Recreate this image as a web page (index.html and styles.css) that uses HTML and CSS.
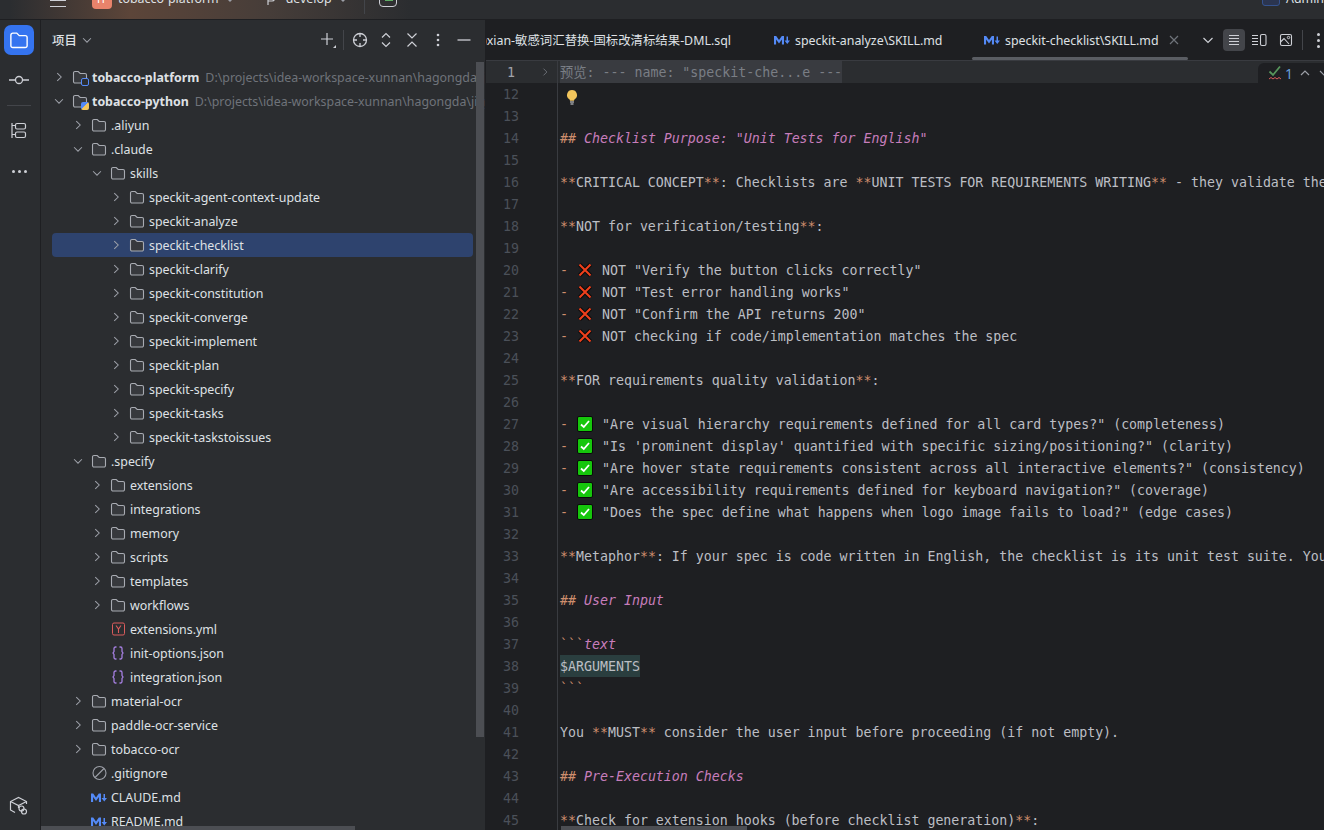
FILE: index.html
```html
<!doctype html>
<html>
<head>
    <meta charset="utf-8">
    <title>tobacco-platform</title>
    <link rel="stylesheet" href="styles.css">
</head>
<body>
<svg class="sprite" width="0" height="0">
    <symbol id="folder" viewBox="0 0 16 16"><path d="M1.500 4a1.500 1.500 0 0 1 1.500-1.500h3.200l2 2H13A1.500 1.500 0 0 1 14.500 6v6.500A1.500 1.500 0 0 1 13 14H3a1.500 1.500 0 0 1-1.500-1.500z" fill="var(--folder-fill, #37393d)" stroke="currentColor" stroke-width="1.100"/></symbol>
    <symbol id="right" viewBox="0 0 16 16"><path d="M6 3.500L10.500 8 6 12.500" fill="none" stroke="currentColor" stroke-width="1.200"/></symbol>
    <symbol id="down" viewBox="0 0 16 16"><path d="M3.500 6L8 10.500 12.500 6" fill="none" stroke="currentColor" stroke-width="1.200"/></symbol>
    <symbol id="json" viewBox="0 0 16 16"><path d="M6.500 2H5.500A1.500 1.500 0 0 0 4 3.500v3L3 8l1 1.500v3A1.500 1.500 0 0 0 5.500 14h1M9.500 2h1A1.500 1.500 0 0 1 12 3.500v3L13 8l-1 1.500v3a1.500 1.500 0 0 1-1.500 1.500h-1" fill="none" stroke="#a57fe0" stroke-width="1.300"/></symbol>
    <symbol id="md" viewBox="0 0 16 10"><path d="M0 9.500V1h2.200L5 5l2.800-4H10v8.500H7.900V4.600L5 8.400 2.100 4.600v4.900zM12.500 1.500H14v4h2L13.250 9 10.500 5.500h2z" fill="#548af7"/></symbol>
    <symbol id="cross" viewBox="0 0 16 16"><path d="M2.500 2.500L13.500 13.500M13.500 2.500L2.500 13.500" fill="none" stroke="#0a0a0a" stroke-width="4"/><path d="M2.500 2.500L13.500 13.500M13.500 2.500L2.500 13.500" fill="none" stroke="#f0401c" stroke-width="2"/></symbol>
    <symbol id="check" viewBox="0 0 16 16"><rect x="0.500" y="0.500" width="15" height="15" rx="1.500" fill="#16c60c" stroke="#0a0a0a"/><path d="M4 8.500L6.800 11 12 5" fill="none" stroke="#fff" stroke-width="1.800"/></symbol>
</svg>

<div class="titlebar">
    <div class="menu-btn"><span></span><span></span><span></span></div>
    <div class="badge">TP</div>
    <span class="title-text">tobacco-platform</span>
    <span class="mini-caret"></span>
    <svg class="branch-icon" width="12" height="14" viewBox="0 0 12 14"><path d="M2 0v14M2 5h4a2.500 2.500 0 0 1 0 5H2" fill="none" stroke="#ced0d6" stroke-width="1.200"/></svg>
    <span class="title-text branch">develop</span>
    <span class="mini-caret"></span>
    <span class="title-sep"></span>
    <div class="run-icon"><span></span></div>
    <div class="title-right">
        <span class="user-box"></span>
        <span class="title-text">Admin</span>
    </div>
</div>

<div class="main">
    <div class="stripe">
        <div class="stripe-btn active"><svg width="20" height="20"><use href="#folder"/></svg></div>
        <div class="stripe-btn commit">
            <svg width="20" height="20" viewBox="0 0 20 20"><circle cx="10" cy="10" r="3.500" fill="none" stroke="currentColor" stroke-width="1.300"/><path d="M0 10h6.500M13.500 10H20" stroke="currentColor" stroke-width="1.300"/></svg>
        </div>
        <div class="stripe-sep"></div>
        <div class="stripe-btn">
            <svg width="20" height="20" viewBox="0 0 20 20"><path d="M3 2v15M3 4.500h3M3 13.500h3" stroke="currentColor" fill="none" stroke-width="1.200"/><rect x="6.500" y="2.500" width="10" height="5.500" rx="1.500" fill="none" stroke="currentColor" stroke-width="1.200"/><rect x="6.500" y="11" width="10" height="5.500" rx="1.500" fill="none" stroke="currentColor" stroke-width="1.200"/></svg>
        </div>
        <div class="stripe-btn dots"><span></span><span></span><span></span></div>
        <div class="stripe-bottom">
            <svg width="20" height="20" viewBox="0 0 20 20"><path d="M6 16.500L1.500 14V5.500L9.500 1.500l8 4V8M1.500 5.500L9.500 9.500l8-4M9.500 9.500V12" fill="none" stroke="currentColor" stroke-width="1.200"/><circle cx="12.500" cy="12.500" r="2.500" fill="none" stroke="currentColor" stroke-width="1.200"/><circle cx="15" cy="15.500" r="2.500" fill="none" stroke="currentColor" stroke-width="1.200"/></svg>
        </div>
    </div>

    <div class="project">
        <div class="panel-head">
            <span class="panel-title">项目</span>
            <svg class="panel-caret" width="14" height="14"><use href="#down"/></svg>
            <div class="panel-tools">
                <svg width="18" height="18" viewBox="0 0 18 18"><path d="M8 2v12M2 8h12" stroke="#ced0d6" stroke-width="1.200"/><path d="M17 14v3h-3z" fill="#ced0d6"/></svg>
                <span class="tool-sep"></span>
                <svg width="16" height="16" viewBox="0 0 16 16"><circle cx="8" cy="8" r="6.500" fill="none" stroke="#ced0d6" stroke-width="1.300"/><path d="M8 1.500v3.500M8 11v3.500M1.500 8H5M11 8h3.500" stroke="#ced0d6" stroke-width="1.300"/></svg>
                <svg width="16" height="16" viewBox="0 0 16 16"><path d="M4 5.500l4-4 4 4M4 10.500l4 4 4-4" fill="none" stroke="#ced0d6" stroke-width="1.200"/></svg>
                <svg width="16" height="16" viewBox="0 0 16 16"><path d="M3.500 1.500L8 6l4.500-4.500M3.500 14.500L8 10l4.500 4.500" fill="none" stroke="#ced0d6" stroke-width="1.200"/></svg>
                <svg width="16" height="16" viewBox="0 0 16 16"><circle cx="8" cy="3" r="1.300" fill="#ced0d6"/><circle cx="8" cy="8" r="1.300" fill="#ced0d6"/><circle cx="8" cy="13" r="1.300" fill="#ced0d6"/></svg>
                <svg width="16" height="16" viewBox="0 0 16 16"><path d="M1.500 8h13" stroke="#ced0d6" stroke-width="1.300"/></svg>
            </div>
        </div>
        <div class="tree">
            <div class="row d0"><svg class="chev"><use href="#right"/></svg>
                <span class="root-icon"><svg class="ico"><use href="#folder"/></svg><i class="mod-java"></i></span>
                <b>tobacco-platform</b><span class="path">D:\projects\idea-workspace-xunnan\hagongda\jin</span></div>
            <div class="row d0"><svg class="chev"><use href="#down"/></svg>
                <span class="root-icon"><svg class="ico"><use href="#folder"/></svg><i class="mod-py"></i></span>
                <b>tobacco-python</b><span class="path">D:\projects\idea-workspace-xunnan\hagongda\jinyan</span></div>
            <div class="row d1"><svg class="chev"><use href="#right"/></svg><svg class="ico"><use href="#folder"/></svg>.aliyun</div>
            <div class="row d1"><svg class="chev"><use href="#down"/></svg><svg class="ico"><use href="#folder"/></svg>.claude</div>
            <div class="row d2"><svg class="chev"><use href="#down"/></svg><svg class="ico"><use href="#folder"/></svg>skills</div>
            <div class="row d3"><svg class="chev"><use href="#right"/></svg><svg class="ico"><use href="#folder"/></svg>speckit-agent-context-update</div>
            <div class="row d3"><svg class="chev"><use href="#right"/></svg><svg class="ico"><use href="#folder"/></svg>speckit-analyze</div>
            <div class="row d3 selected"><svg class="chev"><use href="#right"/></svg><svg class="ico"><use href="#folder"/></svg>speckit-checklist</div>
            <div class="row d3"><svg class="chev"><use href="#right"/></svg><svg class="ico"><use href="#folder"/></svg>speckit-clarify</div>
            <div class="row d3"><svg class="chev"><use href="#right"/></svg><svg class="ico"><use href="#folder"/></svg>speckit-constitution</div>
            <div class="row d3"><svg class="chev"><use href="#right"/></svg><svg class="ico"><use href="#folder"/></svg>speckit-converge</div>
            <div class="row d3"><svg class="chev"><use href="#right"/></svg><svg class="ico"><use href="#folder"/></svg>speckit-implement</div>
            <div class="row d3"><svg class="chev"><use href="#right"/></svg><svg class="ico"><use href="#folder"/></svg>speckit-plan</div>
            <div class="row d3"><svg class="chev"><use href="#right"/></svg><svg class="ico"><use href="#folder"/></svg>speckit-specify</div>
            <div class="row d3"><svg class="chev"><use href="#right"/></svg><svg class="ico"><use href="#folder"/></svg>speckit-tasks</div>
            <div class="row d3"><svg class="chev"><use href="#right"/></svg><svg class="ico"><use href="#folder"/></svg>speckit-taskstoissues</div>
            <div class="row d1"><svg class="chev"><use href="#down"/></svg><svg class="ico"><use href="#folder"/></svg>.specify</div>
            <div class="row d2"><svg class="chev"><use href="#right"/></svg><svg class="ico"><use href="#folder"/></svg>extensions</div>
            <div class="row d2"><svg class="chev"><use href="#right"/></svg><svg class="ico"><use href="#folder"/></svg>integrations</div>
            <div class="row d2"><svg class="chev"><use href="#right"/></svg><svg class="ico"><use href="#folder"/></svg>memory</div>
            <div class="row d2"><svg class="chev"><use href="#right"/></svg><svg class="ico"><use href="#folder"/></svg>scripts</div>
            <div class="row d2"><svg class="chev"><use href="#right"/></svg><svg class="ico"><use href="#folder"/></svg>templates</div>
            <div class="row d2"><svg class="chev"><use href="#right"/></svg><svg class="ico"><use href="#folder"/></svg>workflows</div>
            <div class="row d2 leaf"><svg class="ico" viewBox="0 0 16 16"><rect x="2.500" y="2" width="12" height="12" rx="1.500" fill="none" stroke="#db5c5c"/><path d="M6 4.500L8.500 8 11 4.500M8.500 8v4" fill="none" stroke="#db5c5c" stroke-width="1.100"/></svg>extensions.yml</div>
            <div class="row d2 leaf"><svg class="ico"><use href="#json"/></svg>init-options.json</div>
            <div class="row d2 leaf"><svg class="ico"><use href="#json"/></svg>integration.json</div>
            <div class="row d1"><svg class="chev"><use href="#right"/></svg><svg class="ico"><use href="#folder"/></svg>material-ocr</div>
            <div class="row d1"><svg class="chev"><use href="#right"/></svg><svg class="ico"><use href="#folder"/></svg>paddle-ocr-service</div>
            <div class="row d1"><svg class="chev"><use href="#right"/></svg><svg class="ico"><use href="#folder"/></svg>tobacco-ocr</div>
            <div class="row d1 leaf"><svg class="ico" viewBox="0 0 16 16"><circle cx="8.500" cy="8" r="6.500" fill="none" stroke="#9da0a8" stroke-width="1.100"/><path d="M4 12.500l9-9" stroke="#9da0a8" stroke-width="1.100"/></svg>.gitignore</div>
            <div class="row d1 leaf"><svg class="ico md-ico"><use href="#md"/></svg>CLAUDE.md</div>
            <div class="row d1 leaf"><svg class="ico md-ico"><use href="#md"/></svg>README.md</div>
        </div>
        <div class="vscroll"></div>
        <div class="hscroll"></div>
    </div>

    <div class="editor">
        <div class="tabs">
            <div class="tab tab-sql">)xian-敏感词汇替换-国标改清标结果-DML.sql</div>
            <div class="tab tab-analyze"><svg class="tab-md"><use href="#md"/></svg>speckit-analyze\SKILL.md</div>
            <div class="tab tab-active"><svg class="tab-md"><use href="#md"/></svg>speckit-checklist\SKILL.md
                <svg class="tab-close" width="10" height="10" viewBox="0 0 10 10"><path d="M1 1l8 8M9 1l-8 8" stroke="#6f737a" stroke-width="1.200"/></svg>
            </div>
            <div class="tab-tools">
                <svg class="tab-more" width="16" height="16"><use href="#down"/></svg>
                <span class="view-btn on"><svg width="14" height="14" viewBox="0 0 14 14"><path d="M2 2.500h10M2 5.500h10M2 8.500h10M2 11.500h10" stroke="#ced0d6" stroke-width="1.100"/></svg></span>
                <span class="view-btn"><svg width="16" height="14" viewBox="0 0 16 14"><path d="M1 2.500h6M1 5.500h6M1 8.500h6M1 11.500h6" stroke="#ced0d6" stroke-width="1.100"/><rect x="9.500" y="1.500" width="5.500" height="11" rx="1.500" fill="none" stroke="#ced0d6" stroke-width="1.100"/></svg></span>
                <span class="view-btn"><svg width="14" height="14" viewBox="0 0 14 14"><rect x="1.500" y="1.500" width="11" height="11" rx="1.500" fill="none" stroke="#ced0d6" stroke-width="1.100"/><path d="M1.500 9L5 5.500l5 5.500" fill="none" stroke="#ced0d6" stroke-width="1.100"/><circle cx="9.500" cy="4.500" r="1.200" fill="none" stroke="#ced0d6"/></svg></span>
                <span class="tool-sep"></span>
                <span class="more-dots"><i></i><i></i><i></i></span>
            </div>
        </div>
        <div class="code">
            <div class="line fold-line"><span class="num cur">1</span><span class="gut"><svg width="12" height="12"><use href="#right"/></svg></span><span class="txt"><span class="folded">预览: --- name: "speckit-che...e ---</span></span></div>
            <div class="line"><span class="num">12</span><span class="gut"></span><span class="txt"><svg class="bulb" width="14" height="16" viewBox="0 0 14 16"><path d="M7 1a5 5 0 0 0-3 9c.6.5 1 1 1 1.800h4c0-.8.4-1.300 1-1.800A5 5 0 0 0 7 1z" fill="#f2c55c"/><path d="M5 13h4M5.500 15h3" stroke="#dfe1e5"/></svg></span></div>
            <div class="line"><span class="num">13</span><span class="gut"></span><span class="txt"></span></div>
            <div class="line"><span class="num">14</span><span class="gut"></span><span class="txt"><span class="mk">##</span> <span class="h">Checklist Purpose: "Unit Tests for English"</span></span></div>
            <div class="line"><span class="num">15</span><span class="gut"></span><span class="txt"></span></div>
            <div class="line"><span class="num">16</span><span class="gut"></span><span class="txt"><span class="mk">**</span>CRITICAL CONCEPT<span class="mk">**</span>: Checklists are <span class="mk">**</span>UNIT TESTS FOR REQUIREMENTS WRITING<span class="mk">**</span> - they validate the quality</span></div>
            <div class="line"><span class="num">17</span><span class="gut"></span><span class="txt"></span></div>
            <div class="line"><span class="num">18</span><span class="gut"></span><span class="txt"><span class="mk">**</span>NOT for verification/testing<span class="mk">**</span>:</span></div>
            <div class="line"><span class="num">19</span><span class="gut"></span><span class="txt"></span></div>
            <div class="line"><span class="num">20</span><span class="gut"></span><span class="txt"><span class="mk">-</span> <svg class="emoji"><use href="#cross"/></svg>NOT "Verify the button clicks correctly"</span></div>
            <div class="line"><span class="num">21</span><span class="gut"></span><span class="txt"><span class="mk">-</span> <svg class="emoji"><use href="#cross"/></svg>NOT "Test error handling works"</span></div>
            <div class="line"><span class="num">22</span><span class="gut"></span><span class="txt"><span class="mk">-</span> <svg class="emoji"><use href="#cross"/></svg>NOT "Confirm the API returns 200"</span></div>
            <div class="line"><span class="num">23</span><span class="gut"></span><span class="txt"><span class="mk">-</span> <svg class="emoji"><use href="#cross"/></svg>NOT checking if code/implementation matches the spec</span></div>
            <div class="line"><span class="num">24</span><span class="gut"></span><span class="txt"></span></div>
            <div class="line"><span class="num">25</span><span class="gut"></span><span class="txt"><span class="mk">**</span>FOR requirements quality validation<span class="mk">**</span>:</span></div>
            <div class="line"><span class="num">26</span><span class="gut"></span><span class="txt"></span></div>
            <div class="line"><span class="num">27</span><span class="gut"></span><span class="txt"><span class="mk">-</span> <svg class="emoji"><use href="#check"/></svg>"Are visual hierarchy requirements defined for all card types?" (completeness)</span></div>
            <div class="line"><span class="num">28</span><span class="gut"></span><span class="txt"><span class="mk">-</span> <svg class="emoji"><use href="#check"/></svg>"Is 'prominent display' quantified with specific sizing/positioning?" (clarity)</span></div>
            <div class="line"><span class="num">29</span><span class="gut"></span><span class="txt"><span class="mk">-</span> <svg class="emoji"><use href="#check"/></svg>"Are hover state requirements consistent across all interactive elements?" (consistency)</span></div>
            <div class="line"><span class="num">30</span><span class="gut"></span><span class="txt"><span class="mk">-</span> <svg class="emoji"><use href="#check"/></svg>"Are accessibility requirements defined for keyboard navigation?" (coverage)</span></div>
            <div class="line"><span class="num">31</span><span class="gut"></span><span class="txt"><span class="mk">-</span> <svg class="emoji"><use href="#check"/></svg>"Does the spec define what happens when logo image fails to load?" (edge cases)</span></div>
            <div class="line"><span class="num">32</span><span class="gut"></span><span class="txt"></span></div>
            <div class="line"><span class="num">33</span><span class="gut"></span><span class="txt"><span class="mk">**</span>Metaphor<span class="mk">**</span>: If your spec is code written in English, the checklist is its unit test suite. You are</span></div>
            <div class="line"><span class="num">34</span><span class="gut"></span><span class="txt"></span></div>
            <div class="line"><span class="num">35</span><span class="gut"></span><span class="txt"><span class="mk">##</span> <span class="h">User Input</span></span></div>
            <div class="line"><span class="num">36</span><span class="gut"></span><span class="txt"></span></div>
            <div class="line"><span class="num">37</span><span class="gut"></span><span class="txt"><span class="mk">```</span><span class="h">text</span></span></div>
            <div class="line"><span class="num">38</span><span class="gut"></span><span class="txt"><span class="arg">$ARGUMENTS</span></span></div>
            <div class="line"><span class="num">39</span><span class="gut"></span><span class="txt"><span class="mk">```</span></span></div>
            <div class="line"><span class="num">40</span><span class="gut"></span><span class="txt"></span></div>
            <div class="line"><span class="num">41</span><span class="gut"></span><span class="txt">You <span class="mk">**</span>MUST<span class="mk">**</span> consider the user input before proceeding (if not empty).</span></div>
            <div class="line"><span class="num">42</span><span class="gut"></span><span class="txt"></span></div>
            <div class="line"><span class="num">43</span><span class="gut"></span><span class="txt"><span class="mk">##</span> <span class="h">Pre-Execution Checks</span></span></div>
            <div class="line"><span class="num">44</span><span class="gut"></span><span class="txt"></span></div>
            <div class="line"><span class="num">45</span><span class="gut"></span><span class="txt"><span class="mk">**</span>Check for extension hooks (before checklist generation)<span class="mk">**</span>:</span></div>
        </div>
        <div class="inspect">
            <svg width="14" height="16" viewBox="0 0 14 16"><path d="M1.500 6.500L5 10l7-8.500" fill="none" stroke="#57965c" stroke-width="1.800"/><path d="M1 14l2-1.500 2 1.500 2-1.500 2 1.500 2-1.500 2 1.500" fill="none" stroke="#db5c5c"/></svg>
            <span class="inspect-num">1</span>
            <svg class="inspect-arrow" width="12" height="12" viewBox="0 0 12 12"><path d="M2 8l4-4 4 4" fill="none" stroke="#9da0a8" stroke-width="1.200"/></svg>
            <svg class="inspect-arrow" width="12" height="12" viewBox="0 0 12 12"><path d="M2 4l4 4 4-4" fill="none" stroke="#9da0a8" stroke-width="1.200"/></svg>
        </div>
        <div class="code-hscroll"></div>
    </div>
</div>
</body>
</html>
```

FILE: styles.css
```css
* {
    box-sizing: border-box;
}

html, body {
    margin: 0;
    height: 100%;
    overflow: hidden;
    background: #2b2d30;
    color: #dfe1e5;
    font-family: "Noto Sans", "Noto Sans CJK SC", sans-serif;
    font-size: 12.400px;
}

.sprite {
    position: absolute;
}

/* title bar, cut off by the top of the picture */
.titlebar {
    height: 20px;
    display: flex;
    align-items: flex-end;
    overflow: hidden;
    padding-bottom: 6px;
    border-bottom: 1px solid #1e1f22;
    background: linear-gradient(90deg, #2b2d30 10px, #5c4539 130px, #463d39 270px, #2b2d30 410px);
    color: #dfe1e5;
}

.menu-btn {
    width: 16px;
    margin: 0 0 6px 50px;
    display: flex;
    flex-direction: column;
    gap: 5px;
}

.menu-btn span {
    height: 1px;
    background: #ced0d6;
}

.badge {
    width: 20px;
    height: 20px;
    margin: 0 0 4px 26px;
    border-radius: 4px;
    background: #e8836b;
    color: #fff;
    text-align: center;
    font-size: 11px;
    line-height: 20px;
}

.title-text {
    margin: 0 0 5px 6px;
    line-height: 18px;
}

.mini-caret {
    width: 0;
    height: 0;
    margin: 0 0 8px 8px;
    border: 3px solid transparent;
    border-top-color: #9da0a8;
}

.branch-icon {
    margin: 0 0 8px 33px;
}

.branch {
    margin-left: 8px;
}

.title-sep {
    width: 1px;
    height: 20px;
    margin: 0 0 -1px 18px;
    background: #43454a;
}

.run-icon {
    width: 18px;
    height: 18px;
    margin: 0 0 6px 14px;
    padding: 8px 0 0 5px;
    border: 1.500px solid #ced0d6;
    border-radius: 4px;
}

.run-icon span {
    display: block;
    width: 8px;
    height: 3px;
    border-bottom: 1.500px solid #5fad65;
}

.title-right {
    margin-left: auto;
    display: flex;
    align-items: flex-end;
}

.user-box {
    width: 18px;
    height: 14px;
    margin-bottom: 7px;
    border: 1.500px solid #35538f;
    border-radius: 3px;
    background: #2b3550;
}

.main {
    height: 810px;
    display: flex;
}

/* left tool strip */
.stripe {
    width: 41px;
    flex: none;
    position: relative;
    padding: 5px 4px 0;
    border-right: 1px solid #1e1f22;
    color: #ced0d6;
}

.stripe-btn {
    width: 30px;
    height: 30px;
    display: flex;
    align-items: center;
    justify-content: center;
    border-radius: 7px;
}

.stripe-btn.active {
    --folder-fill: #3574f0;
    background: #3574f0;
    color: #fff;
}

.commit {
    margin-top: 10px;
}

.stripe-sep {
    width: 24px;
    height: 1px;
    margin: 10px 3px;
    background: #43454a;
}

.dots {
    margin-top: 10px;
    gap: 3px;
}

.dots span {
    width: 3px;
    height: 3px;
    border-radius: 50%;
    background: #ced0d6;
}

.stripe-bottom {
    position: absolute;
    left: 9px;
    bottom: 10px;
}

/* project panel */
.project {
    width: 445px;
    flex: none;
    position: relative;
    overflow: hidden;
    border-right: 1px solid #1e1f22;
}

.panel-head {
    height: 40px;
    display: flex;
    align-items: center;
    padding: 0 13px 0 11px;
}

.panel-title {
    font-weight: 500;
}

.panel-caret {
    margin-left: 3px;
    color: #9da0a8;
}

.panel-tools {
    margin-left: auto;
    display: flex;
    align-items: center;
    gap: 10px;
}

.tool-sep {
    width: 1px;
    height: 20px;
    flex: none;
    background: #43454a;
}

.panel-tools .tool-sep {
    margin: 0 -2px 0 -4px;
}

.tree {
    padding-top: 5px;
}

.row {
    height: 24px;
    display: flex;
    align-items: center;
    white-space: nowrap;
    color: #dfe1e5;
}

.row b {
    font-weight: 700;
}

.d0 { padding-left: 11px; }
.d1 { padding-left: 30px; }
.d2 { padding-left: 49px; }
.d3 { padding-left: 68px; }

.d2.leaf { padding-left: 69px; }
.d1.leaf { padding-left: 50px; }

.selected {
    width: 421px;
    margin-left: 11px;
    padding-left: 57px;
    border-radius: 4px;
    background: #2e436e;
}

.chev {
    width: 14px;
    height: 14px;
    flex: none;
    margin-right: 6px;
    color: #9da0a8;
}

.ico {
    width: 16px;
    height: 16px;
    flex: none;
    margin-right: 4px;
    color: #a8abb2;
}

.md-ico {
    height: 11px;
}

.root-icon {
    position: relative;
    display: flex;
}

.mod-java, .mod-py {
    position: absolute;
    right: 3px;
    bottom: -1px;
    width: 8px;
    height: 8px;
    border: 1px solid #548af7;
    border-radius: 2px;
    background: #2b2d30;
}

.mod-py {
    border: 0;
    background: linear-gradient(135deg, #548af7 50%, #f2c55c 50%);
}

.path {
    margin-left: 6px;
    color: #6f737a;
}

.vscroll {
    position: absolute;
    top: 42px;
    right: 1px;
    width: 8px;
    height: 675px;
    background: #4c4e53;
}

.hscroll {
    position: absolute;
    left: 0;
    bottom: 0;
    width: 314px;
    height: 4px;
    background: #4c4e53;
}

/* editor */
.editor {
    flex: 1;
    min-width: 0;
    position: relative;
    overflow: hidden;
    background: #1e1f22;
}

.tabs {
    height: 41px;
    position: relative;
    border-bottom: 1px solid #393b40;
    color: #dfe1e5;
}

.tab {
    position: absolute;
    top: 0;
    height: 40px;
    display: flex;
    align-items: center;
    white-space: nowrap;
}

.tab-sql { left: -3px; }
.tab-analyze { left: 288px; }

.tab-active {
    left: 486px;
    width: 216px;
    padding-left: 12px;
}

.tab-active::after {
    content: "";
    position: absolute;
    left: 0;
    right: 0;
    bottom: 0;
    height: 3px;
    border-radius: 2px;
    background: #5a5d63;
}

.tab-md {
    width: 16px;
    height: 10px;
    margin-right: 5px;
}

.tab-close {
    margin-left: 10px;
}

.tab-tools {
    position: absolute;
    top: 9px;
    right: 4px;
    display: flex;
    align-items: center;
}

.tab-more {
    margin-right: 7px;
    color: #ced0d6;
}

.view-btn {
    width: 22px;
    height: 22px;
    display: flex;
    align-items: center;
    justify-content: center;
    margin-right: 5px;
    border-radius: 4px;
}

.view-btn.on {
    margin-right: 3px;
    background: #43454a;
}

.more-dots {
    width: 3px;
    display: flex;
    flex-direction: column;
    gap: 3px;
    margin-left: 14px;
}

.more-dots i {
    height: 3px;
    border-radius: 50%;
    background: #ced0d6;
}

.code {
    font-family: "DejaVu Sans Mono", "Noto Sans CJK SC", monospace;
    font-size: 13.280px;
    color: #bcbec4;
}

.line {
    height: 22px;
    display: flex;
    line-height: 20px;
    white-space: pre;
}

.num {
    width: 33px;
    flex: none;
    padding-top: 2px;
    text-align: right;
    color: #4b5059;
}

.num.cur {
    width: 29px;
    margin-right: 4px;
    color: #a1a3ab;
}

.gut {
    width: 39px;
    flex: none;
    display: flex;
    align-items: center;
    justify-content: center;
    padding-left: 13px;
    border-right: 1px solid #393b40;
    color: #6f737a;
}

.txt {
    flex: 1;
    display: block;
    padding: 2px 0 0 2px;
}

.fold-line {
    background: #2b2d30;
}

.folded, .arg {
    display: inline-block;
    height: 22px;
    margin-top: -2px;
    padding-top: 2px;
}

.folded {
    background: #393b40;
    color: #7a7e85;
}

.arg {
    background: #2a3e3f;
}

.mk {
    color: #cf8e6d;
}

.h {
    color: #c77dbb;
    font-style: italic;
}

.emoji {
    width: 16px;
    height: 16px;
    margin: 0 9px 0 1px;
    vertical-align: -3px;
}

.bulb {
    margin-left: 5px;
    vertical-align: -6px;
}

.inspect {
    position: absolute;
    top: 43px;
    left: 772px;
    width: 66px;
    height: 20px;
    display: flex;
    align-items: center;
    padding-left: 10px;
    border-radius: 6px 0 0 0;
    background: #1e1f22;
}

.inspect svg {
    flex: none;
}

.inspect-num {
    width: 8px;
    flex: none;
    margin: 0 6px 0 3px;
    font-size: 14px;
    color: #6a9fd8;
}

.inspect-arrow {
    margin-right: 7px;
}

.code-hscroll {
    position: absolute;
    left: 75px;
    bottom: 0;
    width: 186px;
    height: 4px;
    background: #4c4e53;
}
```
